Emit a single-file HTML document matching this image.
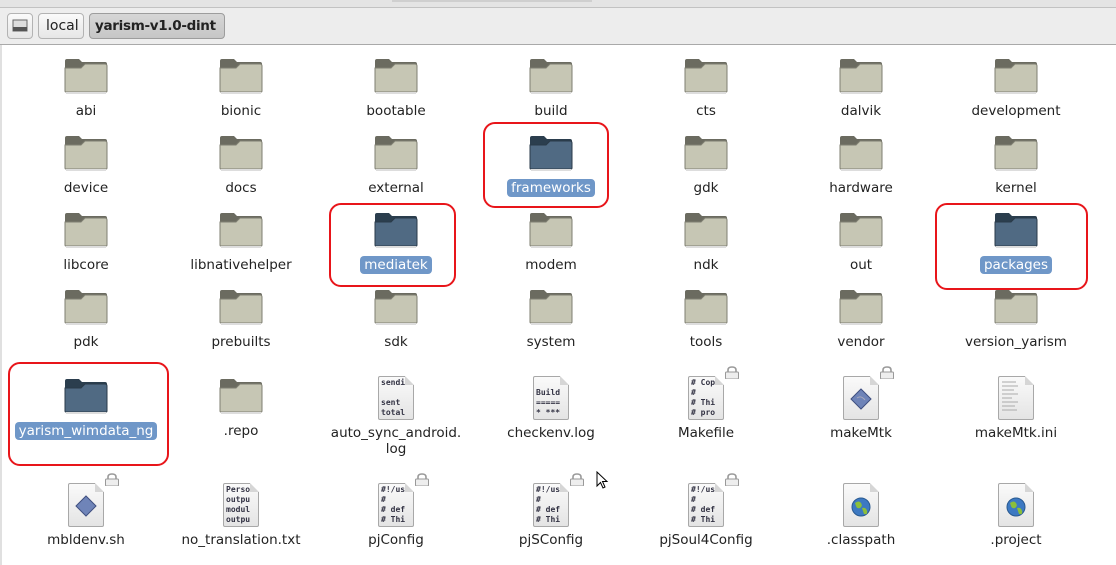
<!DOCTYPE html>
<html><head><style>
body{margin:0;width:1116px;height:565px;overflow:hidden;background:#fff;font-family:"DejaVu Sans","Liberation Sans",sans-serif;position:relative}
.top{position:absolute;left:0;top:0;width:1116px;height:7px;background:#e4e4e4;border-bottom:1px solid #c2c2c2}
.tab{position:absolute;left:392px;top:0;width:200px;height:2px;background:#cfcfcf}
.bar{position:absolute;left:0;top:8px;width:1116px;height:36px;background:#ededed;border-bottom:1px solid #a9a9a9}
.btn{position:absolute;top:13px;height:26px;border:1px solid #b3b3b3;border-radius:4px;background:linear-gradient(#fafafa,#e6e6e6);font-size:14px;line-height:24px;box-sizing:border-box;color:#222;white-space:nowrap;overflow:hidden}
.lb{position:absolute;left:0;top:45px;width:2px;height:520px;background:#e0e0e0}
.it{position:absolute;width:150px;text-align:center;font-size:13.5px;color:#222}
.it svg{display:block;margin:0 auto}
.lab{display:inline-block;padding:1px 4px;margin-top:8px;line-height:16px}
.sel{background:#6f97c8;color:#fff;border-radius:4px}
.red{position:absolute;border:2px solid #e8151a;border-radius:12px;box-sizing:border-box}
.doc{position:relative;width:36px;height:44px;margin:0 auto;text-align:left}
.doc .pg{position:absolute;left:0;top:0;width:34px;height:42px;border:1px solid #a8a8a8;border-radius:2px;background:linear-gradient(#fafafa,#e4e4e4)}
.doc .fold{position:absolute;right:0;top:0;width:0;height:0;border-left:9px solid #d6d6d6;border-top:9px solid #fff}
.doc pre{position:absolute;left:3px;top:2px;margin:0;font:bold 8px/10px "DejaVu Sans Mono",monospace;color:#334;text-align:left}
.lock{position:absolute;left:36px;top:-10px;width:16px;height:13px}
.it .doc + .lab{margin-top:4px}
</style></head><body>
<div class="top"></div><div class="tab"></div>
<div class="bar"></div>
<div class="btn" style="left:7px;width:26px"><svg width="24" height="23"><rect x="5" y="6" width="14" height="11" fill="#ddd" stroke="#666"/><rect x="5" y="13" width="14" height="4" fill="#555"/></svg></div>
<div class="btn" style="left:38px;width:46px;padding-left:7px">local</div>
<div class="btn" style="left:89px;width:136px;padding-left:5px;font-weight:bold;font-size:13.5px;letter-spacing:-0.3px;background:linear-gradient(#d6d6d6,#c6c6c6);border-color:#9d9d9d">yarism-v1.0-dint</div>
<div class="lb"></div>

<svg width="0" height="0" style="position:absolute">
<defs>
<g id="fg"><path d="M1 3q0-2 2-2h12l3 3h23q2 0 2 2v26H1z" fill="#6b6b60"/><path d="M1 10h16l4-4h20q2 0 2 2v25q0 1-1 1H2q-1 0-1-1z" fill="#c6c6b4" stroke="#7f7f72"/><rect x="2" y="34" width="40" height="2" fill="#ddd"/></g>
<g id="fb"><path d="M1 3q0-2 2-2h12l3 3h23q2 0 2 2v26H1z" fill="#2b3e4e"/><path d="M1 10h16l4-4h20q2 0 2 2v25q0 1-1 1H2q-1 0-1-1z" fill="#506a83" stroke="#2a3a48"/><rect x="2" y="34" width="40" height="2" fill="#ddd"/></g>
<g id="lk"><path d="M4 6V4q0-3 4-3t4 3v2" fill="none" stroke="#999" stroke-width="1.6"/><rect x="1.5" y="6" width="13" height="7" rx="1" fill="#eee" stroke="#999"/></g>
</defs></svg>

<!-- row1 -->
<div class="it" style="left:11px;top:58px"><svg width="44" height="36"><use href="#fg"/></svg><span class="lab">abi</span></div>
<div class="it" style="left:166px;top:58px"><svg width="44" height="36"><use href="#fg"/></svg><span class="lab">bionic</span></div>
<div class="it" style="left:321px;top:58px"><svg width="44" height="36"><use href="#fg"/></svg><span class="lab">bootable</span></div>
<div class="it" style="left:476px;top:58px"><svg width="44" height="36"><use href="#fg"/></svg><span class="lab">build</span></div>
<div class="it" style="left:631px;top:58px"><svg width="44" height="36"><use href="#fg"/></svg><span class="lab">cts</span></div>
<div class="it" style="left:786px;top:58px"><svg width="44" height="36"><use href="#fg"/></svg><span class="lab">dalvik</span></div>
<div class="it" style="left:941px;top:58px"><svg width="44" height="36"><use href="#fg"/></svg><span class="lab">development</span></div>
<!-- row2 -->
<div class="it" style="left:11px;top:135px"><svg width="44" height="36"><use href="#fg"/></svg><span class="lab">device</span></div>
<div class="it" style="left:166px;top:135px"><svg width="44" height="36"><use href="#fg"/></svg><span class="lab">docs</span></div>
<div class="it" style="left:321px;top:135px"><svg width="44" height="36"><use href="#fg"/></svg><span class="lab">external</span></div>
<div class="it" style="left:476px;top:135px"><svg width="44" height="36"><use href="#fb"/></svg><span class="lab sel">frameworks</span></div>
<div class="it" style="left:631px;top:135px"><svg width="44" height="36"><use href="#fg"/></svg><span class="lab">gdk</span></div>
<div class="it" style="left:786px;top:135px"><svg width="44" height="36"><use href="#fg"/></svg><span class="lab">hardware</span></div>
<div class="it" style="left:941px;top:135px"><svg width="44" height="36"><use href="#fg"/></svg><span class="lab">kernel</span></div>
<!-- row3 -->
<div class="it" style="left:11px;top:212px"><svg width="44" height="36"><use href="#fg"/></svg><span class="lab">libcore</span></div>
<div class="it" style="left:166px;top:212px"><svg width="44" height="36"><use href="#fg"/></svg><span class="lab">libnativehelper</span></div>
<div class="it" style="left:321px;top:212px"><svg width="44" height="36"><use href="#fb"/></svg><span class="lab sel">mediatek</span></div>
<div class="it" style="left:476px;top:212px"><svg width="44" height="36"><use href="#fg"/></svg><span class="lab">modem</span></div>
<div class="it" style="left:631px;top:212px"><svg width="44" height="36"><use href="#fg"/></svg><span class="lab">ndk</span></div>
<div class="it" style="left:786px;top:212px"><svg width="44" height="36"><use href="#fg"/></svg><span class="lab">out</span></div>
<div class="it" style="left:941px;top:212px"><svg width="44" height="36"><use href="#fb"/></svg><span class="lab sel">packages</span></div>
<!-- row4 -->
<div class="it" style="left:11px;top:289px"><svg width="44" height="36"><use href="#fg"/></svg><span class="lab">pdk</span></div>
<div class="it" style="left:166px;top:289px"><svg width="44" height="36"><use href="#fg"/></svg><span class="lab">prebuilts</span></div>
<div class="it" style="left:321px;top:289px"><svg width="44" height="36"><use href="#fg"/></svg><span class="lab">sdk</span></div>
<div class="it" style="left:476px;top:289px"><svg width="44" height="36"><use href="#fg"/></svg><span class="lab">system</span></div>
<div class="it" style="left:631px;top:289px"><svg width="44" height="36"><use href="#fg"/></svg><span class="lab">tools</span></div>
<div class="it" style="left:786px;top:289px"><svg width="44" height="36"><use href="#fg"/></svg><span class="lab">vendor</span></div>
<div class="it" style="left:941px;top:289px"><svg width="44" height="36"><use href="#fg"/></svg><span class="lab">version_yarism</span></div>
<!-- row5 -->
<div class="it" style="left:11px;top:378px"><svg width="44" height="36"><use href="#fb"/></svg><span class="lab sel">yarism_wimdata_ng</span></div>
<div class="it" style="left:166px;top:378px"><svg width="44" height="36"><use href="#fg"/></svg><span class="lab">.repo</span></div>
<div class="it" style="left:321px;top:376px"><div class="doc"><div class="pg"></div><div class="fold"></div><pre>sendi

sent
total</pre></div><span class="lab">auto_sync_android.<br>log</span></div>
<div class="it" style="left:476px;top:376px"><div class="doc"><div class="pg"></div><div class="fold"></div><pre style="top:12px">Build
=====
* ***</pre></div><span class="lab">checkenv.log</span></div>
<div class="it" style="left:631px;top:376px"><div class="doc"><div class="pg"></div><div class="fold"></div><pre># Cop
#
# Thi
# pro</pre><svg class="lock"><use href="#lk"/></svg></div><span class="lab">Makefile</span></div>
<div class="it" style="left:786px;top:376px"><div class="doc"><div class="pg"></div><div class="fold"></div><svg style="position:absolute;left:7px;top:12px" width="22" height="22"><path d="M11 1L21 11L11 21L1 11Z" fill="#6f84b8" stroke="#3f4f80"/><path d="M7 10q4-3 8 2" stroke="#aab" fill="none"/></svg><svg class="lock"><use href="#lk"/></svg></div><span class="lab">makeMtk</span></div>
<div class="it" style="left:941px;top:376px"><div class="doc"><div class="pg"></div><div class="fold"></div><svg style="position:absolute;left:4px;top:4px" width="22" height="34"><g stroke="#aaa" stroke-width="1"><path d="M0 2h14M0 6h16M0 10h12M0 14h16M0 18h10M0 22h16M0 26h13M0 30h15"/></g></svg></div><span class="lab">makeMtk.ini</span></div>
<!-- row6 -->
<div class="it" style="left:11px;top:483px"><div class="doc"><div class="pg"></div><div class="fold"></div><svg style="position:absolute;left:7px;top:12px" width="22" height="22"><path d="M11 1L21 11L11 21L1 11Z" fill="#6f84b8" stroke="#3f4f80"/></svg><svg class="lock"><use href="#lk"/></svg></div><span class="lab">mbldenv.sh</span></div>
<div class="it" style="left:166px;top:483px"><div class="doc"><div class="pg"></div><div class="fold"></div><pre>Perso
outpu
modul
outpu</pre></div><span class="lab">no_translation.txt</span></div>
<div class="it" style="left:321px;top:483px"><div class="doc"><div class="pg"></div><div class="fold"></div><pre>#!/us
#
# def
# Thi</pre><svg class="lock"><use href="#lk"/></svg></div><span class="lab">pjConfig</span></div>
<div class="it" style="left:476px;top:483px"><div class="doc"><div class="pg"></div><div class="fold"></div><pre>#!/us
#
# def
# Thi</pre><svg class="lock"><use href="#lk"/></svg></div><span class="lab">pjSConfig</span></div>
<div class="it" style="left:631px;top:483px"><div class="doc"><div class="pg"></div><div class="fold"></div><pre>#!/us
#
# def
# Thi</pre><svg class="lock"><use href="#lk"/></svg></div><span class="lab">pjSoul4Config</span></div>
<div class="it" style="left:786px;top:483px"><div class="doc"><div class="pg"></div><div class="fold"></div><svg style="position:absolute;left:7px;top:13px" width="22" height="22"><circle cx="11" cy="11" r="9" fill="#3d79c2" stroke="#2a5a90"/><path d="M5 7q4-3 6 0t-1 5q-3 1-4-2zM12 12q4-1 5 3t-3 3z" fill="#8cbf3a"/></svg></div><span class="lab">.classpath</span></div>
<div class="it" style="left:941px;top:483px"><div class="doc"><div class="pg"></div><div class="fold"></div><svg style="position:absolute;left:7px;top:13px" width="22" height="22"><circle cx="11" cy="11" r="9" fill="#3d79c2" stroke="#2a5a90"/><path d="M5 7q4-3 6 0t-1 5q-3 1-4-2zM12 12q4-1 5 3t-3 3z" fill="#8cbf3a"/></svg></div><span class="lab">.project</span></div>

<svg style="position:absolute;left:596px;top:471px" width="14" height="20"><path d="M1 1L1 15L4.5 11.5L7 17L9 16L6.5 10.5L11 10.5Z" fill="#fff" stroke="#000"/></svg>

<div class="red" style="left:483px;top:122px;width:126px;height:86px"></div>
<div class="red" style="left:329px;top:203px;width:127px;height:84px"></div>
<div class="red" style="left:935px;top:203px;width:153px;height:87px"></div>
<div class="red" style="left:8px;top:362px;width:161px;height:104px"></div>
</body></html>
